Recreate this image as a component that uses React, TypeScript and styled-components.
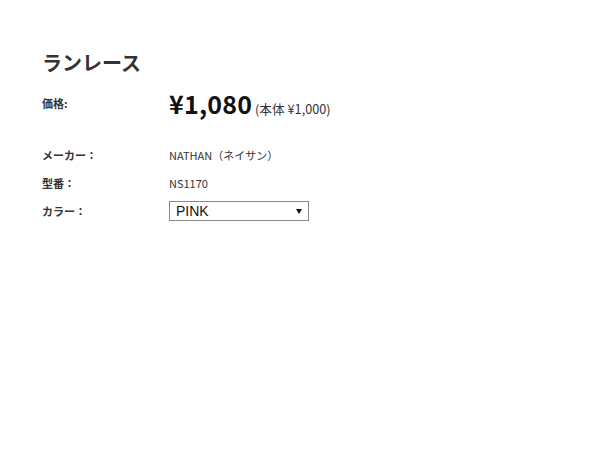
import React from "react";
import styled, { createGlobalStyle } from "styled-components";

const Global = createGlobalStyle`
  body {
    margin: 0;
    background: #fff;
    color: #333;
    font-family: "Noto Sans CJK JP", "Noto Sans", sans-serif;
  }
`;

const Page = styled.div`
  padding: 48px 42px;
`;

const Title = styled.h1`
  margin: 0 0 8px;
  font-size: 20px;
  font-weight: 700;
  line-height: 30px;
  color: #333;
`;

const Table = styled.div`
  display: grid;
  grid-template-columns: 127px 1fr;
  align-items: center;
`;

const Label = styled.div<{ $h: number; $gap?: number }>`
  font-size: 11px;
  font-weight: 700;
  height: ${(p) => p.$h}px;
  margin-top: ${(p) => p.$gap ?? 0}px;
  display: flex;
  align-items: center;
`;

const Value = styled.div<{ $h: number; $gap?: number }>`
  font-size: 11px;
  height: ${(p) => p.$h}px;
  margin-top: ${(p) => p.$gap ?? 0}px;
  display: flex;
  align-items: center;
`;

const PriceLine = styled.div`
  display: flex;
  align-items: baseline;
`;

const Price = styled.span`
  font-size: 25px;
  font-weight: 700;
  color: #111;
  letter-spacing: 0.2px;
`;

const Sub = styled.span`
  font-size: 12.7px;
  margin-left: 3px;
`;

const SelectWrap = styled.div`
  position: relative;
  width: 140px;
  height: 20px;
`;

const Select = styled.select`
  appearance: none;
  -webkit-appearance: none;
  width: 140px;
  height: 20px;
  font-family: "Liberation Sans", Arial, sans-serif;
  font-size: 14px;
  color: #111;
  border: 1px solid #888;
  border-radius: 0;
  background: #fff;
  padding: 0 0 0 6px;
  outline: none;
`;

const Arrow = styled.span`
  position: absolute;
  right: 7px;
  top: 8px;
  width: 0;
  height: 0;
  border-left: 3px solid transparent;
  border-right: 3px solid transparent;
  border-top: 5px solid #111;
  pointer-events: none;
`;

export default function App() {
  return (
    <>
      <Global />
      <Page>
        <Title>ランレース</Title>
        <Table>
          <Label $h={34}>価格:</Label>
          <Value $h={34}>
            <PriceLine>
              <Price>¥1,080</Price>
              <Sub>(本体 ¥1,000)</Sub>
            </PriceLine>
          </Value>
          <Label $h={28} $gap={21}>メーカー：</Label>
          <Value $h={28} $gap={21}>NATHAN（ネイサン）</Value>
          <Label $h={28}>型番：</Label>
          <Value $h={28}>NS1170</Value>
          <Label $h={28}>カラー：</Label>
          <Value $h={28}>
            <SelectWrap>
              <Select defaultValue="PINK">
                <option>PINK</option>
              </Select>
              <Arrow />
            </SelectWrap>
          </Value>
        </Table>
      </Page>
    </>
  );
}
